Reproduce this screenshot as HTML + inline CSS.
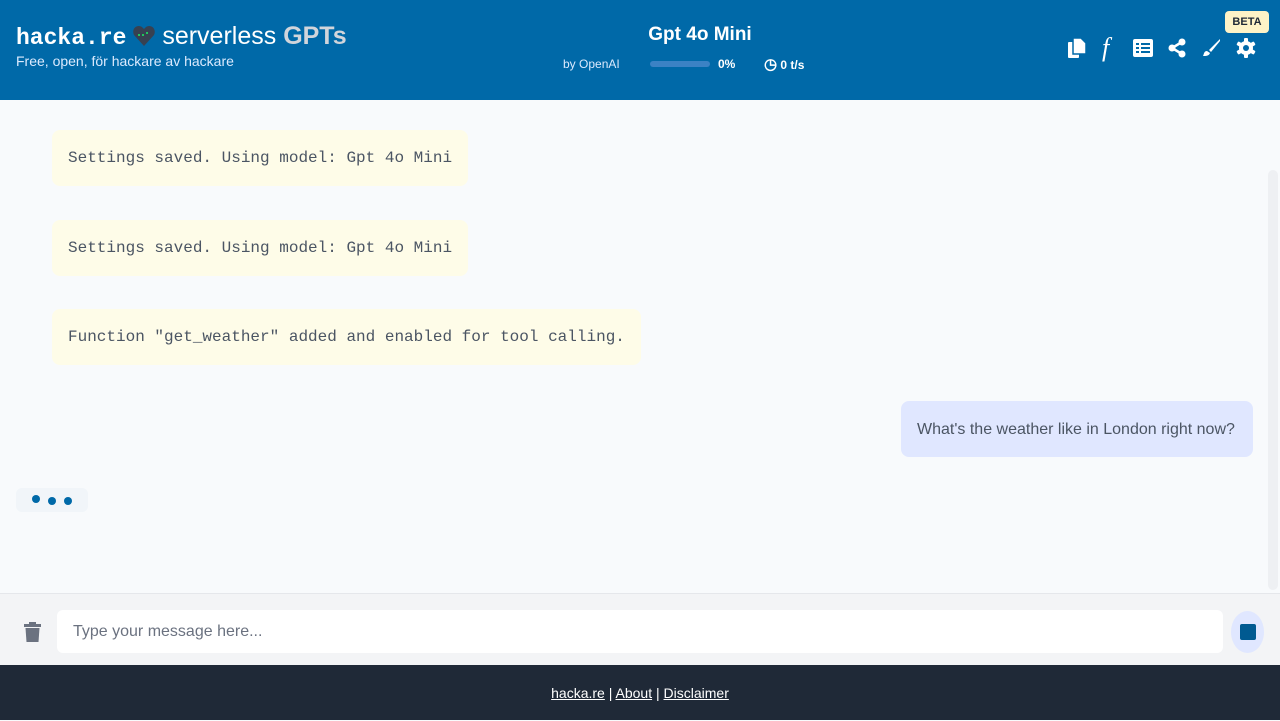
<!DOCTYPE html>
<html><head><meta charset="utf-8"><style>
body{margin:0;width:1280px;height:720px;overflow:hidden;font-family:"Liberation Sans",sans-serif;background:#f8fafc;position:relative}
.hdr{position:absolute;left:0;top:0;width:1280px;height:100px;background:#0069a8;color:#fff}
.logo{position:absolute;left:16px;top:22px;font-size:25px;white-space:nowrap}
.logo .m{font-family:"Liberation Mono",monospace;font-weight:bold;font-size:23px}
.logo .g{color:#d1d5db;font-weight:bold}
.sub{position:absolute;left:16px;top:53px;font-size:14px;color:#dbeafe}
.mid{position:absolute;left:540px;width:320px;top:24px;text-align:center}
.bubble{position:absolute;left:52px;background:#fefce8;font-family:"Liberation Mono",monospace;font-size:16px;color:#4b5563;padding:0 16px;height:56px;line-height:56px;border-radius:8px;white-space:nowrap}
.icon{position:absolute;top:38px}
.foot{position:absolute;left:0;top:665px;width:1280px;height:55px;background:#1f2937;color:#fff;text-align:center;line-height:56px;font-size:14px}
.foot u{color:#fff}
</style></head><body>
<div class="hdr">
 <div class="logo"><span class="m">hacka.re</span> <svg width="22" height="20" viewBox="0 0 22 20" style="vertical-align:-2px"><path d="M11 20L1 9C-1 5 1 0 6 0c2.5 0 4 2 5 3 1-1 2.5-3 5-3 5 0 7 5 5 9z" fill="#374151"/><rect x="5" y="8" width="2" height="2" fill="#22c55e"/><rect x="9" y="8" width="2" height="2" fill="#22c55e"/><rect x="13" y="6" width="2" height="2" fill="#22c55e"/></svg> serverless <span class="g">GPTs</span></div>
 <div class="sub">Free, open, för hackare av hackare</div>
 <div class="mid"><div style="font-size:19px;font-weight:bold">Gpt 4o Mini</div>
  <div style="position:relative;height:20px;margin-top:11px;font-size:12px">
   <span style="position:absolute;left:23px;top:0;color:#dbeafe">by OpenAI</span>
   <span style="position:absolute;left:110px;top:4px;width:60px;height:6px;background:#3b82c4;border-radius:3px"></span>
   <span style="position:absolute;left:178px;top:0;font-weight:bold">0%</span>
   <span style="position:absolute;left:224px;top:-2px;font-weight:bold"><span style="font-size:15px">◷</span> 0 t/s</span>
  </div></div>
 <div style="position:absolute;left:1225px;top:11px;width:44px;height:22px;background:#fef3c7;border-radius:4px;color:#1f2937;font-size:11px;font-weight:bold;text-align:center;line-height:22px">BETA</div>
 <svg class="icon" style="left:1068px" width="18" height="20" viewBox="0 0 18 20"><rect x="0" y="4" width="11" height="16" rx="1" fill="#fff"/><path d="M5 0h8l5 5v11H5z" fill="#fff" stroke="#0069a8" stroke-width="1.5"/></svg>
 <div class="icon" style="left:1102px;top:33px;font-family:'Liberation Serif',serif;font-style:italic;font-size:26px">f</div>
 <svg class="icon" style="left:1133px;top:39px" width="20" height="18" viewBox="0 0 20 18"><rect width="20" height="18" rx="2" fill="#fff"/><g fill="#0069a8"><rect x="3" y="4" width="3" height="2"/><rect x="8" y="4" width="9" height="2"/><rect x="3" y="8" width="3" height="2"/><rect x="8" y="8" width="9" height="2"/><rect x="3" y="12" width="3" height="2"/><rect x="8" y="12" width="9" height="2"/></g></svg>
 <svg class="icon" style="left:1168px" width="18" height="20" viewBox="0 0 18 20"><circle cx="14" cy="4" r="3.5" fill="#fff"/><circle cx="4" cy="10" r="3.5" fill="#fff"/><circle cx="14" cy="16" r="3.5" fill="#fff"/><path d="M14 4L4 10l10 6" stroke="#fff" stroke-width="2.5" fill="none"/></svg>
 <svg class="icon" style="left:1201px" width="20" height="20" viewBox="0 0 20 20"><path d="M19 1L8 12l2 2L19 3z" fill="#fff"/><path d="M6 13c-3 0-3 3-4 5 3 0 6 0 7-3z" fill="#fff"/></svg>
 <svg class="icon" style="left:1236px" width="20" height="20" viewBox="0 0 20 20"><g fill="#fff"><circle cx="10" cy="10" r="7"/><rect x="8" y="0" width="4" height="20" rx="1"/><rect x="8" y="0" width="4" height="20" rx="1" transform="rotate(60 10 10)"/><rect x="8" y="0" width="4" height="20" rx="1" transform="rotate(120 10 10)"/></g><circle cx="10" cy="10" r="3" fill="#0069a8"/></svg>
</div>
<div class="bubble" style="top:130px">Settings saved. Using model: Gpt 4o Mini</div>
<div class="bubble" style="top:220px">Settings saved. Using model: Gpt 4o Mini</div>
<div class="bubble" style="top:309px">Function "get_weather" added and enabled for tool calling.</div>
<div style="position:absolute;left:901px;top:401px;width:352px;height:56px;background:#e0e7ff;border-radius:8px;color:#4b5563;font-size:16px;line-height:58px;text-indent:16px;white-space:nowrap">What's the weather like in London right now?</div>
<div style="position:absolute;left:16px;top:488px;width:72px;height:24px;background:#f1f5f9;border-radius:6px"><span style="position:absolute;left:16px;top:7px;width:8px;height:8px;border-radius:4px;background:#0069a8"></span><span style="position:absolute;left:32px;top:9px;width:8px;height:8px;border-radius:4px;background:#0069a8"></span><span style="position:absolute;left:48px;top:9px;width:8px;height:8px;border-radius:4px;background:#0069a8"></span></div>
<div style="position:absolute;left:1268px;top:170px;width:10px;height:420px;background:#eef0f3;border-radius:5px"></div>
<div style="position:absolute;left:0;top:593px;width:1280px;height:72px;background:#f3f4f6;border-top:1px solid #e5e7eb"></div>
<svg style="position:absolute;left:24px;top:622px" width="17" height="20" viewBox="0 0 17 20"><rect x="0" y="2" width="17" height="3" fill="#6b7280"/><rect x="5" y="0" width="7" height="3" fill="#6b7280"/><path d="M1.5 6h14l-1 14h-12z" fill="#6b7280"/></svg>
<div style="position:absolute;left:57px;top:610px;width:1166px;height:43px;background:#fff;border-radius:6px;color:#6b7280;font-size:16px;line-height:43px;text-indent:16px">Type your message here...</div>
<div style="position:absolute;left:1231px;top:611px;width:33px;height:42px;background:#e0e7ff;border-radius:50%"><span style="position:absolute;left:9px;top:13px;width:16px;height:16px;background:#005a91;border-radius:2px"></span></div>
<div class="foot"><u>hacka.re</u> | <u>About</u> | <u>Disclaimer</u></div>
</body></html>
